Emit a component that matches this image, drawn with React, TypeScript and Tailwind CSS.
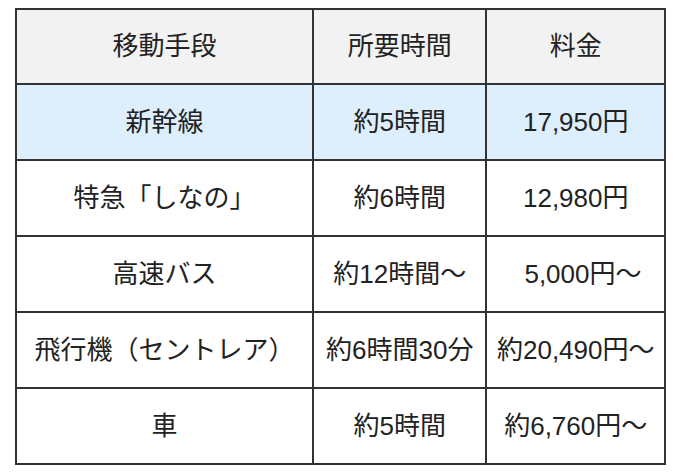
const rows = [
  { mode: '新幹線', time: '約5時間', price: '17,950円', hl: true },
  { mode: '特急「しなの」', time: '約6時間', price: '12,980円' },
  { mode: '高速バス', time: '約12時間～', price: '\u00a0\u00a05,000円～' },
  { mode: '飛行機（セントレア）', time: '約6時間30分', price: '約20,490円～' },
  { mode: '車', time: '約5時間', price: '約6,760円～' },
];

export default function App() {
  return (
    <div
      className="w-[680px] h-[473px] bg-white pt-[8px] pl-[15px]"
      style={{ fontFamily: '"Liberation Sans", "Noto Sans CJK JP", sans-serif' }}
    >
      <table className="w-[651px] border-collapse border-2 border-[#333] text-[26px] text-[#222] text-center">
        <colgroup>
          <col className="w-[298px]" />
          <col className="w-[174px]" />
          <col className="w-[179px]" />
        </colgroup>
        <thead>
          <tr className="h-[75px] bg-[#f2f2f2]">
            <th className="border-2 border-[#333] font-normal">移動手段</th>
            <th className="border-2 border-[#333] font-normal">所要時間</th>
            <th className="border-2 border-[#333] font-normal">料金</th>
          </tr>
        </thead>
        <tbody>
          {rows.map((r) => (
            <tr key={r.mode} className={r.hl ? 'h-[76px] bg-[#ddeefc]' : 'h-[76px] bg-white'}>
              <td className="border-2 border-[#333] whitespace-nowrap">{r.mode}</td>
              <td className="border-2 border-[#333] whitespace-nowrap">{r.time}</td>
              <td className="border-2 border-[#333] whitespace-nowrap">{r.price}</td>
            </tr>
          ))}
        </tbody>
      </table>
    </div>
  );
}
